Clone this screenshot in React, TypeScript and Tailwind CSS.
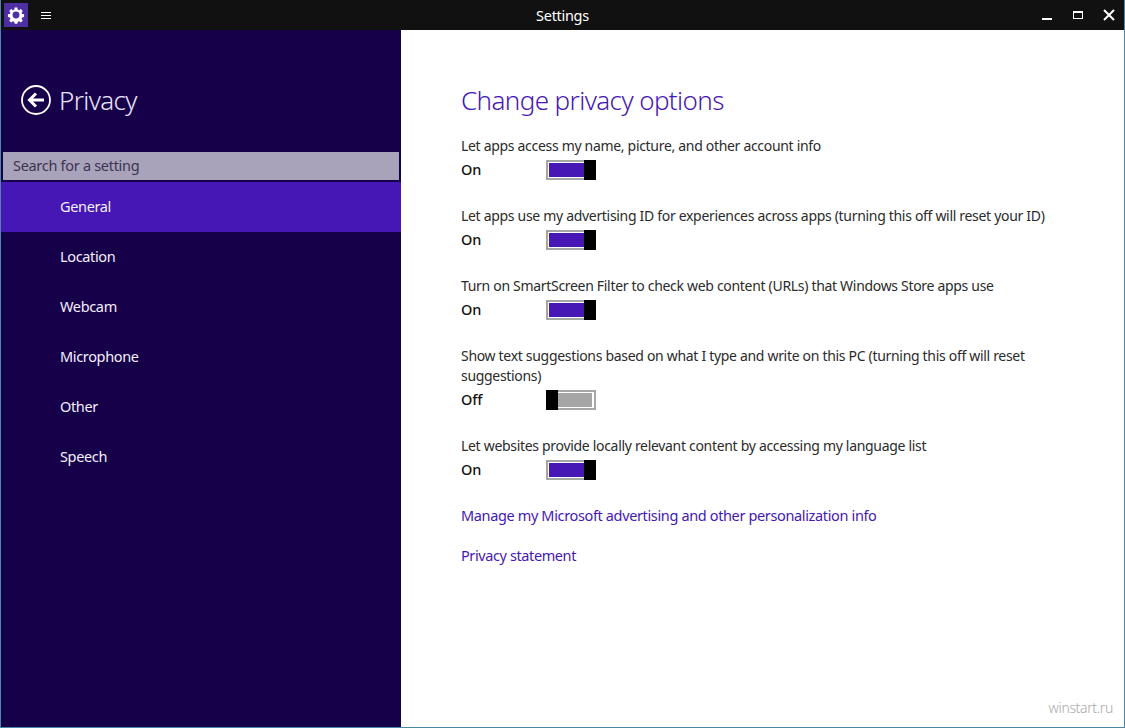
import React from "react";

const font = { fontFamily: '"Noto Sans", sans-serif' };

function Toggle({ on }: { on: boolean }) {
  return (
    <div className="mt-[1px] flex h-[20px] w-[50px] border-[2px] border-[#a6a6a6] bg-white">
      {on ? (
        <div className="-my-[2px] -mr-[2px] flex flex-1">
          <div className="my-[2px] ml-[1px] mr-0 flex-1 border-y border-white bg-[#4617b4]" />
          <div className="h-[20px] w-[12px] bg-black" />
        </div>
      ) : (
        <div className="-my-[2px] -ml-[2px] flex flex-1">
          <div className="h-[20px] w-[12px] bg-black" />
          <div className="my-[2px] mr-[1px] flex-1 border-y border-r border-white bg-[#a6a6a6]" />
        </div>
      )}
    </div>
  );
}

function State({ on }: { on: boolean }) {
  return (
    <div className="mt-[3px] flex h-[20px] items-center">
      <div className="w-[85px] text-[14.5px] font-medium leading-[20px] tracking-[-0.2px] text-[#111]">{on ? "On" : "Off"}</div>
      <Toggle on={on} />
    </div>
  );
}

function Setting({ label, on }: { label: string; on: boolean }) {
  return (
    <div className="h-[70px] pt-[1px]">
      <div className="text-[14px] leading-[20px] tracking-[-0.31px] text-[#2b2b2b]">{label}</div>
      <State on={on} />
    </div>
  );
}

const nav = ["General", "Location", "Webcam", "Microphone", "Other", "Speech"];

export default function App() {
  return (
    <div className="relative flex h-[728px] w-[1125px] flex-col overflow-hidden border-x border-b border-[#4d87a8] bg-white" style={font}>
      <header className="relative flex h-[30px] shrink-0 items-center bg-[#111111] text-white">
        <div className="ml-[3px] flex h-[24px] w-[24px] items-center justify-center bg-[#4e2fa3]">
          <svg width="18" height="18" viewBox="0 0 24 24" fill="none">
            <path
              d="M10 1h4l.6 3.2 1.9.8 2.7-1.8 2.8 2.8-1.8 2.7.8 1.9 3 .4v4l-3 .6-.8 1.9 1.8 2.7-2.8 2.8-2.7-1.8-1.9.8-.6 3h-4l-.6-3-1.9-.8-2.7 1.8-2.8-2.8 1.8-2.7-.8-1.9-3-.6v-4l3-.4.8-1.9-1.8-2.7 2.8-2.8 2.7 1.8 1.9-.8z"
              fill="#fff"
              transform="translate(1.2 1.2) scale(.9)"
            />
            <circle cx="12" cy="12" r="4.6" fill="#4e2fa3" />
          </svg>
        </div>
        <div className="ml-[13px] flex w-[10px] flex-col gap-[2px]">
          <div className="h-px bg-white" />
          <div className="h-px bg-white" />
          <div className="h-px bg-white" />
        </div>
        <div className="absolute inset-x-0 top-0 text-center text-[14.5px] leading-[30px] tracking-[-0.3px]">Settings</div>
        <div className="ml-auto flex items-center">
          <div className="mr-[21px] mt-[7px] h-[2px] w-[10px] bg-white" />
          <div className="mr-[20px] h-[8px] w-[10px] border border-t-2 border-white" />
          <svg className="mr-[9px]" width="12" height="12" viewBox="0 0 12 12">
            <path d="M1 1l10 10M11 1L1 11" stroke="#fff" strokeWidth="2" />
          </svg>
        </div>
      </header>

      <div className="flex flex-1">
        <aside className="w-[400px] shrink-0 bg-[#17004a]">
          <div className="flex h-[122px] items-start pl-[20px] pt-[55px]">
            <svg width="30" height="30" viewBox="0 0 30 30" fill="none" stroke="#fff">
              <circle cx="15" cy="15" r="14" strokeWidth="1.8" />
              <path d="M23 15H9M15 8.5L8.5 15l6.5 6.5" strokeWidth="3" />
            </svg>
            <div className="-mt-[1px] ml-[8px] text-[26px] font-light leading-[32px] tracking-[-0.65px] text-[#e9e3f7]">Privacy</div>
          </div>
          <div className="mx-[2px] h-[28px] bg-[#a9a2bb] pl-[10px] text-[14.5px] leading-[27px] tracking-[-0.3px] text-[#3c3451]">
            Search for a setting
          </div>
          <div className="mt-[2px]">
            {nav.map((n, i) => (
              <div
                key={n}
                className={`h-[50px] pl-[59px] text-[14.5px] leading-[49px] tracking-[-0.35px] text-[#f3effb] ${i === 0 ? "bg-[#4617b4]" : ""}`}
              >
                {n}
              </div>
            ))}
          </div>
        </aside>

        <main className="flex-1 pl-[60px] pt-[51px]">
          <h1 className="text-[26px] font-light leading-[38px] tracking-[-0.6px] text-[#4617b4]">Change privacy options</h1>
          <div className="mt-[16px]">
            <Setting on label="Let apps access my name, picture, and other account info" />
            <Setting on label="Let apps use my advertising ID for experiences across apps (turning this off will reset your ID)" />
            <Setting on label="Turn on SmartScreen Filter to check web content (URLs) that Windows Store apps use" />
            <div className="h-[90px] pt-[1px]">
              <div className="w-[590px] text-[14px] leading-[20px] tracking-[-0.31px] text-[#2b2b2b]">
                Show text suggestions based on what I type and write on this PC (turning this off will reset suggestions)
              </div>
              <State on={false} />
            </div>
            <Setting on label="Let websites provide locally relevant content by accessing my language list" />
          </div>
          <div className="text-[14.5px] leading-[20px] tracking-[-0.36px] text-[#4617b4]">Manage my Microsoft advertising and other personalization info</div>
          <div className="mt-[20px] text-[14.5px] leading-[20px] tracking-[-0.4px] text-[#4617b4]">Privacy statement</div>
        </main>
      </div>
      <div className="absolute bottom-[9px] right-[11px] text-[14px] font-light tracking-[-0.35px] text-[#a8a8a8]">winstart.ru</div>
    </div>
  );
}
